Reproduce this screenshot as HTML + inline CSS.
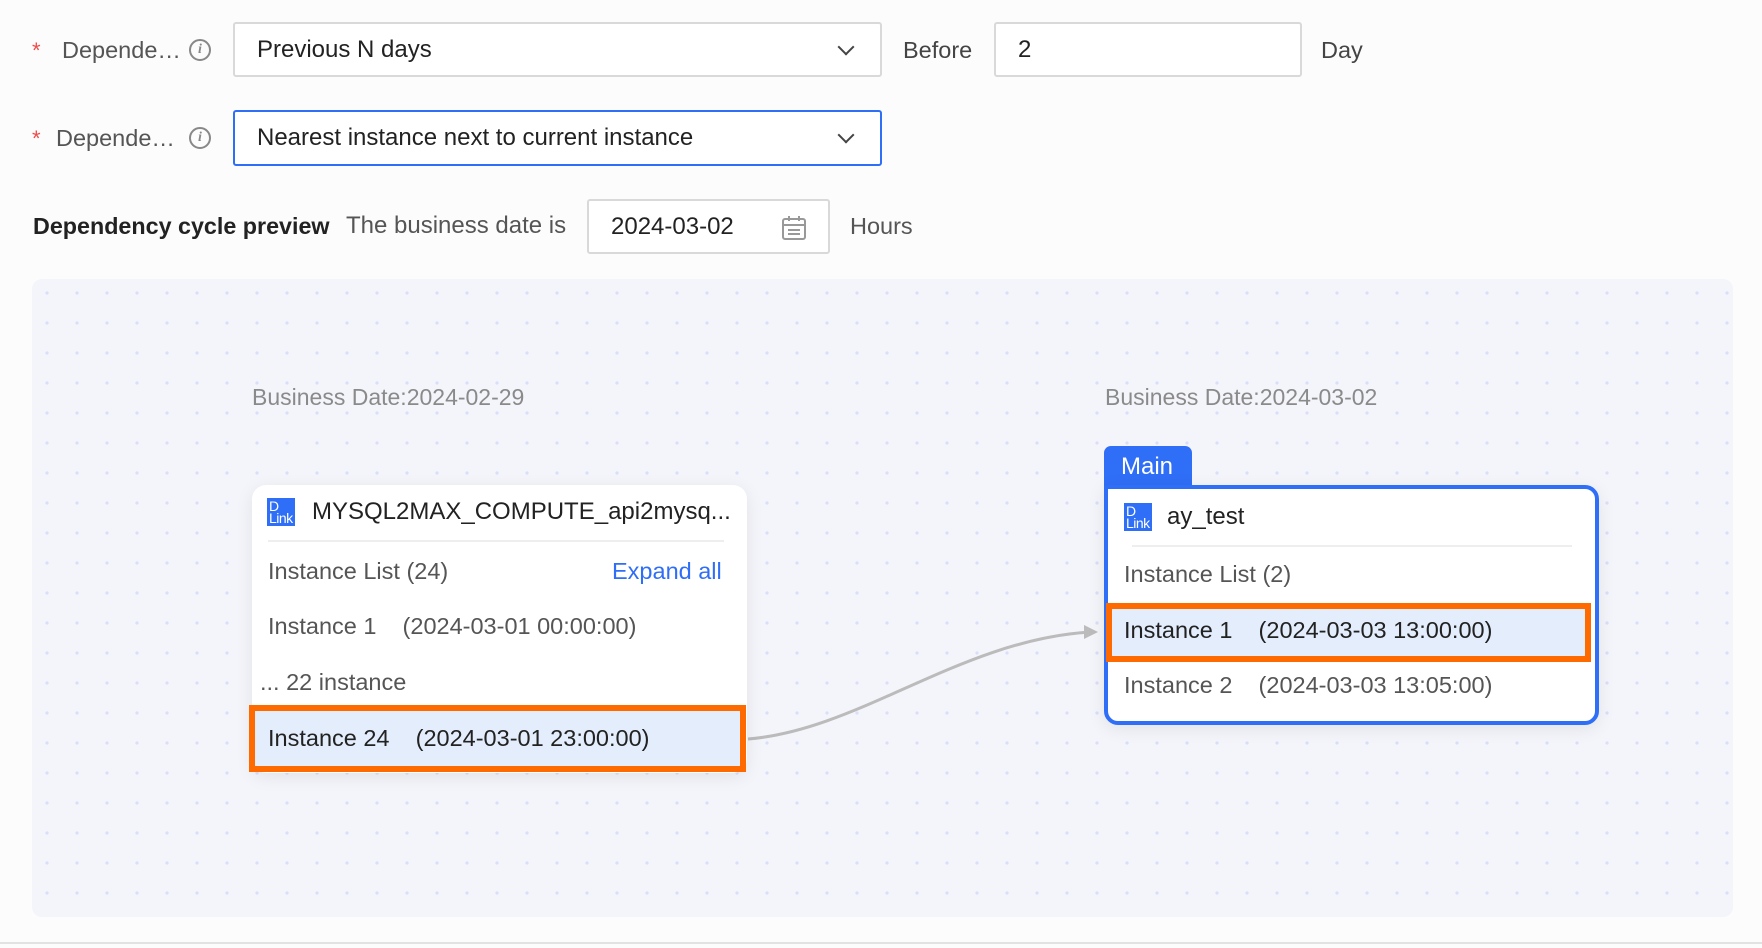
<!DOCTYPE html>
<html><head><meta charset="utf-8"><style>
*{box-sizing:border-box;margin:0;padding:0}
body{width:1762px;height:948px;background:#fcfcfc;font-family:"Liberation Sans",Arial,sans-serif;position:relative;overflow:hidden;color:#222}
.a{position:absolute}
.lbl{font-size:23.5px;color:#555;line-height:28px}
.star{color:#f04a4a;font-size:22px}
.info{width:22px;height:22px;border:2px solid #888;border-radius:50%;color:#888;font-size:14px;font-style:italic;font-family:"Liberation Serif",serif;text-align:center;line-height:18px;font-weight:bold}
.box{background:#fff;border:2px solid #d9d9d9;border-radius:3px;font-size:24px;color:#222;display:flex;align-items:center;padding-left:22px}
.chev{position:absolute;right:28px;top:50%;width:12px;height:12px;border-right:2px solid #444;border-bottom:2px solid #444;transform:translateY(-75%) rotate(45deg)}
.canvas{left:32px;top:279px;width:1701px;height:638px;background-color:#f4f5fa;border-radius:10px;
background-image:radial-gradient(circle,#d9defa 1.6px,transparent 1.8px);background-size:30px 30px;background-position:0px -1px}
.card{background:#fff;border-radius:14px;box-shadow:0 4px 18px rgba(0,0,0,.08)}
.t{font-size:23.5px;color:#555;white-space:pre;line-height:28px}
.logo{width:28px;height:28px;background:#2f6ef6;color:#fff;font-size:14px;line-height:12px;padding:2px 0 0 2px;letter-spacing:-0.5px}
.bd{font-size:23px;color:#8a8a8a;line-height:28px}
</style></head><body>
<div class="a star" style="left:32px;top:38px">*</div>
<div class="a lbl" style="left:62px;top:36px">Depende…</div>
<div class="a info" style="left:189px;top:39px">i</div>
<div class="a box" style="left:233px;top:22px;width:649px;height:55px">Previous N days<span class="chev"></span></div>
<div class="a lbl" style="left:903px;top:36px;color:#444">Before</div>
<div class="a box" style="left:994px;top:22px;width:308px;height:55px">2</div>
<div class="a lbl" style="left:1321px;top:36px;color:#444">Day</div>

<div class="a star" style="left:32px;top:126px">*</div>
<div class="a lbl" style="left:56px;top:124px">Depende…</div>
<div class="a info" style="left:189px;top:127px">i</div>
<div class="a box" style="left:233px;top:110px;width:649px;height:56px;border-color:#2f6ef6">Nearest instance next to current instance<span class="chev"></span></div>

<div class="a" style="left:33px;top:212px;font-size:23.3px;font-weight:bold;color:#222;line-height:28px">Dependency cycle preview</div>
<div class="a lbl" style="left:346px;top:212px;font-size:24px">The business date is</div>
<div class="a box" style="left:587px;top:199px;width:243px;height:55px">2024-03-02
<svg class="a" style="left:192px;top:14px" width="26" height="26" viewBox="0 0 26 26" fill="none" stroke="#999" stroke-width="2"><rect x="2" y="4" width="22" height="20" rx="2"/><line x1="2" y1="10" x2="24" y2="10"/><line x1="8" y1="1" x2="8" y2="6"/><line x1="18" y1="1" x2="18" y2="6"/><line x1="7" y1="15" x2="19" y2="15"/><line x1="7" y1="19" x2="19" y2="19"/></svg></div>
<div class="a lbl" style="left:850px;top:212px">Hours</div>

<div class="a canvas"></div>
<div class="a bd" style="left:252px;top:383px">Business Date:2024-02-29</div>
<div class="a bd" style="left:1105px;top:383px">Business Date:2024-03-02</div>

<svg class="a" style="left:0;top:0" width="1762" height="948"><path d="M748 739 C 860 730, 960 640, 1090 632" fill="none" stroke="#bbb" stroke-width="3"/><polygon points="1098,632 1084,625 1084,639" fill="#bbb"/></svg>

<div class="a card" style="left:252px;top:485px;width:495px;height:288px"></div>
<div class="a logo" style="left:267px;top:498px">D<br>Link</div>
<div class="a" style="left:312px;top:498px;font-size:24px;color:#222;line-height:28px">MYSQL2MAX_COMPUTE_api2mysq...</div>
<div class="a" style="left:268px;top:540px;width:456px;height:2px;background:#eee"></div>
<div class="a t" style="left:268px;top:557px">Instance List (24)</div>
<div class="a" style="left:612px;top:557px;font-size:23.5px;color:#2f6ef6;line-height:28px">Expand all</div>
<div class="a t" style="left:268px;top:612px">Instance 1    (2024-03-01 00:00:00)</div>
<div class="a t" style="left:260px;top:668px">... 22 instance</div>
<div class="a" style="left:249px;top:705px;width:497px;height:67px;border:6px solid #ff6a00;background:#e3edfc"></div>
<div class="a t" style="left:268px;top:724px;color:#222">Instance 24    (2024-03-01 23:00:00)</div>

<div class="a" style="left:1104px;top:446px;width:88px;height:46px;background:#2f6ef6;border-radius:7px 7px 0 0;color:#fff;font-size:24px;padding:7px 0 0 17px">Main</div>
<div class="a" style="left:1104px;top:485px;width:495px;height:240px;border:4px solid #2f6ef6;border-radius:0 14px 14px 14px;background:#fff;box-shadow:0 4px 18px rgba(0,0,0,.08)"></div>
<div class="a logo" style="left:1124px;top:503px">D<br>Link</div>
<div class="a" style="left:1167px;top:503px;font-size:24px;color:#222;line-height:28px">ay_test</div>
<div class="a" style="left:1132px;top:545px;width:440px;height:2px;background:#eee"></div>
<div class="a t" style="left:1124px;top:560px">Instance List (2)</div>
<div class="a" style="left:1106px;top:603px;width:485px;height:59px;border:6px solid #ff6a00;background:#e3edfc"></div>
<div class="a t" style="left:1124px;top:616px;color:#222">Instance 1    (2024-03-03 13:00:00)</div>
<div class="a t" style="left:1124px;top:671px">Instance 2    (2024-03-03 13:05:00)</div>

<div class="a" style="left:0;top:942px;width:1762px;height:2px;background:#e2e2e2"></div>
</body></html>
